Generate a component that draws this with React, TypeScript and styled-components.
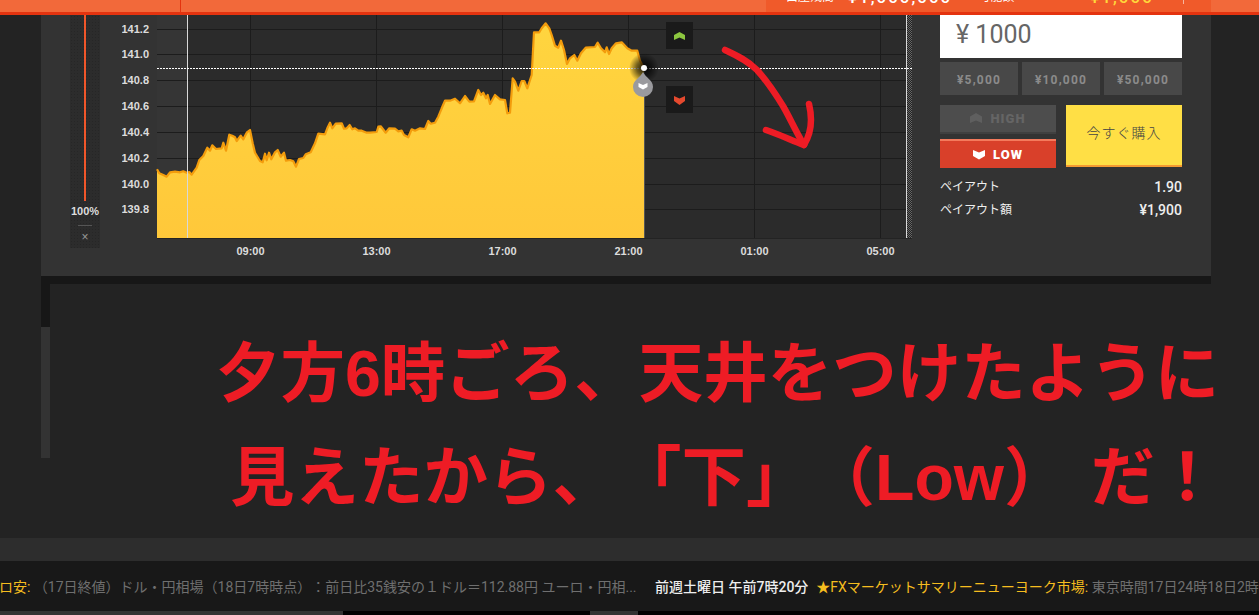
import React from "react";
import styled, { createGlobalStyle } from "styled-components";

const CJK = `Roboto, "Noto Sans CJK JP", sans-serif`;

const Global = createGlobalStyle`
  html, body { margin: 0; padding: 0; background: #232323; overflow: hidden; }
  body { font-family: ${CJK}; text-spacing-trim: space-all; }
  #root { width: 1259px; height: 615px; overflow: hidden; }
`;

const Page = styled.div`
  width: 1259px; height: 615px; display: flex; flex-direction: column; overflow: hidden; background: #232323;
`;
const Header = styled.header`
  flex: 0 0 15px; box-sizing: border-box; display: flex; background: #f2693a; border-bottom: 3px solid #e4330f; overflow: hidden;
`;
const HeaderLeft = styled.div`
  flex: 0 0 181px; min-width: 0; overflow: hidden; box-sizing: border-box; border-right: 1px solid #e4330f; color: #fff; font-size: 13px; line-height: 16px; padding-left: 41px; white-space: nowrap;
`;
const HeaderLeftText = styled.div`margin-top: -15px;`;
const HeaderSpacer = styled.div`flex: 0 0 585px;`;
const Account = styled.div`
  flex: 0 0 445px; min-width: 0; background: #f05a2a; display: flex; align-items: flex-start; color: #fff; white-space: nowrap; padding-left: 20px; box-sizing: border-box; height: 12px; overflow: hidden;
`;
const AccLabel = styled.span<{ $mr: number }>`font-size: 12px; line-height: 16px; margin-top: -11px; flex: none; margin-right: ${(p) => p.$mr}px;`;
const AccValue = styled.span<{ $yellow?: boolean; $mr: number }>`
  font-size: 17px; font-weight: 500; line-height: 18px; margin-top: -12px; letter-spacing: 2px; flex: none; color: ${(p) => (p.$yellow ? "#ffd83a" : "#fff")}; margin-right: ${(p) => p.$mr}px;
`;
const AccDivider = styled.span`width: 1px; height: 4px; flex: none; background: #f7b59f;`;

const Panel = styled.section`
  flex: 0 0 261px; margin: 0 48px 0 41px; background: #333; display: flex; box-sizing: border-box;
`;
const SliderCol = styled.div`
  margin-left: 29px; flex: 0 0 30px; height: 233px; display: flex; flex-direction: column; align-items: center;
  background-color: #2c2c2c;
  background-image: radial-gradient(#262626 0.6px, transparent 0.7px);
  background-size: 3px 3px;
`;
const SliderTrack = styled.div`width: 2px; height: 186px; background: #f0562a; margin-right: 1px;`;
const SliderValue = styled.div`
  font: bold 11px "Liberation Sans", sans-serif; color: #ddd; line-height: 13px; margin-top: 4px; 
`;
const SliderRule = styled.div`width: 14px; height: 1px; background: #555; margin-top: 7px;`;
const SliderClose = styled.div`
  font: 12px/14px "Liberation Sans", sans-serif; color: #999; margin-top: 4px;
`;
const ChartWrap = styled.div`margin-left: 22px; flex: 0 0 811px; height: 261px;`;
const ChartSvg = styled.svg`display: block;`;

const Side = styled.aside`
  margin-left: 7px; flex: 0 0 242px; display: flex; flex-direction: column;
`;
const AmountBox = styled.div`
  height: 43px; background: #fff; color: #666; font-size: 25px; line-height: 40px; padding-left: 16px; box-sizing: border-box; font-family: ${CJK};
`;
const Presets = styled.div`display: grid; grid-template-columns: repeat(3, 78px); gap: 4px; margin-top: 4px;`;
const Preset = styled.div`
  height: 33px; background: #484848; color: #8b8b8b; font: bold 12px/36px Roboto, sans-serif; text-align: center; letter-spacing: 1.2px;
`;
const TradeRow = styled.div`display: flex; gap: 10px; margin-top: 10px;`;
const Directions = styled.div`flex: 0 0 116px; display: flex; flex-direction: column; gap: 5px;`;
const DirButton = styled.div<{ $active?: boolean }>`
  box-sizing: border-box; display: flex; align-items: center; justify-content: center; gap: 8px;
  height: 29px;
  background: ${(p) => (p.$active ? "#d9402a" : "#4d4d4d")};
  color: ${(p) => (p.$active ? "#fff" : "#656565")};
  border-top: ${(p) => (p.$active ? "2px solid #f47a5c" : "0")};
  border-bottom: ${(p) => (p.$active ? "0" : "2px solid #404040")};
  font: 900 13px "Roboto", sans-serif; letter-spacing: 1px;
`;
const BuyButton = styled.div`
  flex: 0 0 116px; height: 62px; box-sizing: border-box; padding-bottom: 6px; background: #ffdf45; border-bottom: 2px solid #f59a32; color: #444; font-size: 14px; font-weight: 300; display: flex; align-items: center; justify-content: center; letter-spacing: 1px;
`;
const PayTable = styled.div`margin-top: 8px;`;
const PayRow = styled.div`
  display: flex; justify-content: space-between; color: #eee; font-size: 12px; line-height: 23px;
`;
const PayValue = styled.span`font-weight: 500; font-size: 14px;`;

const LowerRail = styled.div`
  margin: 0 48px 0 41px; flex: 0 0 8px; background: #171717;
`;
const Lower = styled.section`
  flex: 0 0 254px; display: flex; padding-left: 41px; box-sizing: border-box;
`;
const Scroll = styled.div`flex: 0 0 9px; height: 174px; background: #171717; display: flex; flex-direction: column; justify-content: flex-end;`;
const ScrollThumb = styled.div`height: 131px; background: #333;`;
const Message = styled.div`
  margin-left: 166px; padding-top: 38px; color: #ee1c25; font-family: "Liberation Sans", "Noto Sans CJK JP", sans-serif; font-weight: 700; font-size: 64.5px; line-height: 104px; white-space: nowrap;
`;
const MessageLine = styled.div<{ $indent?: number }>`margin-left: ${(p) => p.$indent ?? 0}px;`;
const MessageTail = styled.span`margin-left: 22px;`;
const Band = styled.div`flex: 0 0 23px; background: #2d2d2d;`;
const Ticker = styled.div`
  flex: 0 0 50px; background: #181818; display: flex; align-items: center; overflow: hidden; white-space: nowrap; font-size: 14px; color: #6f6f6f; font-family: ${CJK};
`;
const Story = styled.div`flex: 0 0 668px; margin-left: -29px; overflow: hidden; box-sizing: border-box;`;
const Gold = styled.span`color: #f5bd1f;`;
const DateLabel = styled.span`color: #eee; font-weight: 500; margin-left: 16px; margin-right: 8px;`;
const BottomBar = styled.div`flex: 0 0 4px; display: flex; background: #000;`;
const BottomSeg = styled.div<{ $w: number; $c: string }>`flex: 0 0 ${(p) => p.$w}px; background: ${(p) => p.$c};`;

const z1: [number, number][] = [[471,508],[478,520],[490,525],[500,530],[510,517],[525,515],[540,517],[550,514],[560,518],[568,516],[575,524],[590,503],[598,480],[610,468],[622,443],[630,452],[637,436],[648,447],[665,445],[670,428],[678,452],[688,404],[697,407],[705,412],[710,423],[722,407],[730,418],[740,398],[750,390],[758,430],[765,458],[780,483],[788,487],[795,461],[800,481],[807,458],[814,478],[825,457],[833,450],[842,470],[852,458],[858,482],[870,480],[880,484],[888,500],[897,477],[910,474],[917,463],[932,457],[945,430],[955,401],[975,403],[982,385],[990,368],[997,385],[1007,371],[1025,370],[1032,386],[1040,385],[1049,375],[1057,388],[1065,385],[1075,392],[1085,392],[1100,398],[1110,398],[1130,396],[1135,380],[1142,379],[1157,398],[1168,385],[1185,386],[1195,394],[1205,392],[1212,405],[1225,412],[1235,388],[1245,392]];
const z2: [number, number][] = [[0,385],[15,387],[25,363],[32,371],[45,368],[55,350],[65,325],[75,302],[90,302],[105,296],[120,310],[135,288],[148,305],[162,304],[175,270],[183,285],[190,278],[198,295],[203,285],[210,312],[225,285],[240,298],[255,300],[262,340],[270,338],[278,235],[285,245],[295,272],[305,243],[313,243],[322,265],[335,225],[342,97],[358,97],[365,85],[377,70],[388,85],[395,105],[405,137],[415,143],[423,122],[432,150],[441,192],[450,175],[463,165],[472,182],[483,160],[497,143],[525,141],[533,128],[543,145],[555,157],[560,142],[567,162],[575,145],[588,130],[605,127],[622,145],[635,152],[652,152],[660,182],[672,205]];
const pts = [...z1.map(([x, y]) => [x / 3, y / 3]), ...z2.map(([x, y]) => [(x + 1260) / 3, y / 3])];
const line = pts.map(([x, y]) => `${x.toFixed(1)},${y.toFixed(1)}`).join(" ");
const area = `M157,238 L${line} L644.5,238 Z`;

const hLines = [29, 54, 80, 106, 132, 158, 184, 209];
const vLines = [250, 376, 502, 628, 754, 880];
const yLabels: [string, number][] = [["141.2", 29], ["141.0", 54], ["140.8", 80], ["140.6", 106], ["140.4", 132], ["140.2", 158], ["140.0", 184], ["139.8", 209]];
const xLabels: [string, number][] = [["09:00", 250.5], ["13:00", 376.5], ["17:00", 502.5], ["21:00", 628.5], ["01:00", 754.5], ["05:00", 880.5]];

// The svg coordinate space is the page coordinate space of the chart area
const Chart = () => (
  <ChartSvg width={811} height={261} viewBox="122 15 811 261">
    <defs>
      <pattern id="hatch" width="2" height="2" patternUnits="userSpaceOnUse">
        <rect width="2" height="2" fill="#222" />
        <rect width="1" height="1" fill="#666" />
        <rect x="1" y="1" width="1" height="1" fill="#666" />
      </pattern>
      <radialGradient id="glow">
        <stop offset="0" stopColor="#000" stopOpacity="0.9" />
        <stop offset="0.5" stopColor="#000" stopOpacity="0.55" />
        <stop offset="1" stopColor="#000" stopOpacity="0" />
      </radialGradient>
      <linearGradient id="gold" x1="0" y1="0" x2="0" y2="1">
        <stop offset="0" stopColor="#ffd53f" />
        <stop offset="1" stopColor="#ffc83a" />
      </linearGradient>
    </defs>
    <rect x="157" y="15" width="749" height="223" fill="#2b2b2b" />
    <rect x="157" y="15" width="30" height="223" fill="#353535" />
    {hLines.map((y) => <rect key={y} x="157" y={y} width="749" height="1" fill="#1c1c1c" />)}
    {vLines.map((x) => <rect key={x} x={x} y="15" width="1" height="223" fill="#1c1c1c" />)}
    <rect x="157" y="238" width="755" height="1" fill="#232323" />
    <path d={area} fill="url(#gold)" />
    <polyline points={line} fill="none" stroke="#f39c0c" strokeWidth="2.2" strokeLinejoin="round" />
    <rect x="644" y="68" width="1" height="170" fill="#555" />
    <rect x="187" y="15" width="1" height="223" fill="#d8d8d8" />
    <rect x="906" y="15" width="1" height="223" fill="#d8d8d8" />
    <rect x="907" y="15" width="5" height="223" fill="url(#hatch)" />
    <line x1="157" y1="68.5" x2="912" y2="68.5" stroke="#fff" strokeWidth="1" strokeDasharray="2 1" />
    <circle cx="644" cy="68" r="15" fill="url(#glow)" />
    <circle cx="644" cy="68" r="3" fill="#fff" />
    <path d="M643 72 C 640 78 633 80 633 87 A 10 10 0 0 0 653 87 C 653 80 646 78 643 72 Z" fill="#9a9a9e" />
    <path d="M638.5 83 L643 85 L647.5 83 L647.5 87 L643 89.5 L638.5 87 Z" fill="#fff" />
    <rect x="666" y="22" width="27" height="27" fill="#1a1a1a" />
    <path d="M674 35 L679.5 32 L685 35 L685 40 L679.5 37.5 L674 40 Z" fill="#8cc63f" />
    <rect x="666" y="86" width="27" height="27" fill="#1a1a1a" />
    <path d="M674 96 L679.5 98.5 L685 96 L685 101 L679.5 105 L674 101 Z" fill="#e5492e" />
    <g fontFamily="'Liberation Sans', sans-serif" fontWeight="700" fontSize="11" fill="#dcdcdc">
      {yLabels.map(([t, y]) => <text key={t} x="149" y={y + 4} textAnchor="end">{t}</text>)}
      {xLabels.map(([t, x]) => <text key={t} x={x} y="255" textAnchor="middle">{t}</text>)}
    </g>
    <g fill="none" stroke="#ee1c25" strokeWidth="6.5" strokeLinecap="round" strokeLinejoin="round">
      <path d="M725 50 C 738 56 748 61 757 70 C 767 81 775 93 783 106 C 790 118 796 132 804 145" />
      <path d="M766 130 C 778 134 791 140 804 145 C 809 137 814 125 809 104" />
    </g>
  </ChartSvg>
);

const Chevron = ({ up, color }: { up?: boolean; color: string }) => (
  <svg width="12" height="11" viewBox="0 0 12 11">
    <path d={up ? "M0 3.5 L6 0 L12 3.5 L12 10 L6 7.5 L0 10 Z" : "M0 1 L6 3.5 L12 1 L12 7 L6 10.5 L0 7 Z"} fill={color} />
  </svg>
);

export default function App() {
  return (
    <Page>
      <Global />
      <Header>
        <HeaderLeft><HeaderLeftText>取引可能額の上限（円）</HeaderLeftText></HeaderLeft>
        <HeaderSpacer />
        <Account>
          <AccLabel $mr={14}>口座残高</AccLabel>
          <AccValue $mr={26}>¥1,000,000</AccValue>
          <AccLabel $mr={76}>可能額</AccLabel>
          <AccValue $yellow $mr={29}>¥1,000</AccValue>
          <AccDivider />
        </Account>
      </Header>
      <Panel>
        <SliderCol>
          <SliderTrack />
          <SliderValue>100%</SliderValue>
          <SliderRule />
          <SliderClose>×</SliderClose>
        </SliderCol>
        <ChartWrap><Chart /></ChartWrap>
        <Side>
          <AmountBox>¥ 1000</AmountBox>
          <Presets>
            <Preset>¥5,000</Preset>
            <Preset>¥10,000</Preset>
            <Preset>¥50,000</Preset>
          </Presets>
          <TradeRow>
            <Directions>
              <DirButton><Chevron up color="#5f5f5f" />HIGH</DirButton>
              <DirButton $active><Chevron color="#fff" />LOW</DirButton>
            </Directions>
            <BuyButton>今すぐ購入</BuyButton>
          </TradeRow>
          <PayTable>
            <PayRow><span>ペイアウト</span><PayValue>1.90</PayValue></PayRow>
            <PayRow><span>ペイアウト額</span><PayValue>¥1,900</PayValue></PayRow>
          </PayTable>
        </Side>
      </Panel>
      <LowerRail />
      <Lower>
        <Scroll><ScrollThumb /></Scroll>
        <Message>
          <MessageLine>夕方6時ごろ、天井をつけたように</MessageLine>
          <MessageLine $indent={14}>見えたから、「下」（Low）<MessageTail>だ！</MessageTail></MessageLine>
        </Message>
      </Lower>
      <Band />
      <Ticker>
        <Story>
          <Gold>ユーロ安:</Gold> （17日終値）ドル・円相場（18日7時時点）：前日比35銭安の１ドル＝112.88円 ユーロ・円相...
        </Story>
        <DateLabel>前週土曜日 午前7時20分</DateLabel>
        <Gold>★FXマーケットサマリーニューヨーク市場:</Gold>&nbsp;東京時間17日24時18日2時
      </Ticker>
      <BottomBar>
        <BottomSeg $w={343} $c="#333" />
        <BottomSeg $w={247} $c="#000" />
        <BottomSeg $w={48} $c="#333" />
      </BottomBar>
    </Page>
  );
}
